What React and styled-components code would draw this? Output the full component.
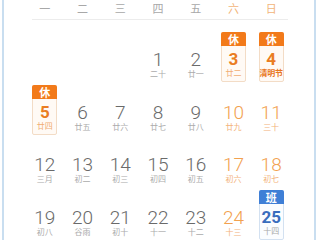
import React from "react";
import styled, { createGlobalStyle, css } from "styled-components";

const GlobalStyle = createGlobalStyle`
  html, body { margin: 0; padding: 0; background: #ffffff; }
  body { font-family: Roboto, "Noto Sans CJK SC", sans-serif; }
`;

const Frame = styled.div`
  width: 320px;
  height: 240px;
  overflow: hidden;
  background: #ffffff;
`;

const Panel = styled.div`
  box-sizing: border-box;
  margin-left: 2px;
  width: 314px;
  height: 240px;
  border-left: 2px solid #c9def0;
  border-right: 2px solid #c9def0;
  padding-left: 22px;
`;

const Columns = styled.div`
  display: grid;
  grid-template-columns: repeat(7, 1fr);
  width: 264px;
`;

const WeekHeader = styled(Columns)`
  height: 16px;
  padding-bottom: 3px;
`;

const WeekName = styled.div`
  font-family: "Noto Sans CJK SC", sans-serif;
  font-size: 11px;
  line-height: 16px;
  text-align: center;
  color: ${(p) => (p.$weekend ? "#f2b57a" : "#a8a8a8")};
`;

const Divider = styled.div`
  margin-left: 6px;
  width: 256px;
  height: 1px;
  background: #ececec;
`;

const Body = styled(Columns)`
  margin-top: 10px;
  grid-auto-rows: 52.5px;
`;

const Cell = styled.div`
  display: flex;
  flex-direction: column;
  align-items: center;
  padding-top: 2px;
`;

const Plain = styled.div`
  display: flex;
  flex-direction: column;
  align-items: center;
  padding-top: 19px;
`;

const palette = {
  rest: {
    head: "#f27a1a",
    border: "#f3dcc6",
    bg: "#fffaf5",
    digit: "#ea7d22",
    lunar: "#f1ad72",
  },
  work: {
    head: "#3f7fd6",
    border: "#d3e1f1",
    bg: "#fbfdff",
    digit: "#3a6dbd",
    lunar: "#a9a9a9",
  },
};

const Badge = styled.div`
  box-sizing: border-box;
  width: 25px;
  display: flex;
  flex-direction: column;
  align-items: center;
  border: 1px solid ${(p) => palette[p.$kind].border};
  border-radius: 2px;
  background: ${(p) => palette[p.$kind].bg};
  padding-bottom: 3px;
`;

const BadgeHead = styled.div`
  align-self: stretch;
  margin: -1px -1px 0;
  height: 14px;
  border-radius: 2px 2px 0 0;
  background: ${(p) => palette[p.$kind].head};
  color: #ffffff;
  font-family: "Noto Sans CJK SC", sans-serif;
  font-weight: 700;
  font-size: 11px;
  line-height: 14px;
  text-align: center;
`;

const Digit = styled.div`
  margin-top: ${(p) => (p.$inBadge ? "4px" : "0")};
  font-family: Roboto, sans-serif;
  font-size: ${(p) => (p.$inBadge ? "17px" : "19px")};
  font-weight: ${(p) => (p.$inBadge ? 700 : 300)};
  line-height: 18px;
  height: 18px;
  white-space: nowrap;
  color: ${(p) => p.$color};
`;

const Lunar = styled.div`
  font-family: "Noto Sans CJK SC", sans-serif;
  font-size: 8px;
  line-height: 10px;
  height: 10px;
  white-space: nowrap;
  color: ${(p) => p.$color};
  ${(p) =>
    p.$fest &&
    css`
      font-weight: 700;
      letter-spacing: -0.2px;
    `}
`;

const weekNames = ["一", "二", "三", "四", "五", "六", "日"];

const rows = [
  [
    null,
    null,
    null,
    { d: 1, l: "二十" },
    { d: 2, l: "廿一" },
    { d: 3, l: "廿二", tag: "rest" },
    { d: 4, l: "清明节", tag: "rest", fest: true },
  ],
  [
    { d: 5, l: "廿四", tag: "rest" },
    { d: 6, l: "廿五" },
    { d: 7, l: "廿六" },
    { d: 8, l: "廿七" },
    { d: 9, l: "廿八" },
    { d: 10, l: "廿九" },
    { d: 11, l: "三十" },
  ],
  [
    { d: 12, l: "三月" },
    { d: 13, l: "初二" },
    { d: 14, l: "初三" },
    { d: 15, l: "初四" },
    { d: 16, l: "初五" },
    { d: 17, l: "初六" },
    { d: 18, l: "初七" },
  ],
  [
    { d: 19, l: "初八" },
    { d: 20, l: "谷雨" },
    { d: 21, l: "初十" },
    { d: 22, l: "十一" },
    { d: 23, l: "十二" },
    { d: 24, l: "十三" },
    { d: 25, l: "十四", tag: "work" },
  ],
];

function Day({ day, weekend }) {
  if (!day) return <Cell />;
  if (day.tag) {
    const c = palette[day.tag];
    return (
      <Cell>
        <Badge $kind={day.tag}>
          <BadgeHead $kind={day.tag}>{day.tag === "rest" ? "休" : "班"}</BadgeHead>
          <Digit $inBadge $color={c.digit}>
            {day.d}
          </Digit>
          <Lunar $fest={day.fest} $color={day.fest ? "#e8761c" : c.lunar}>
            {day.l}
          </Lunar>
        </Badge>
      </Cell>
    );
  }
  return (
    <Cell>
      <Plain>
        <Digit $color={weekend ? "#f2a14f" : "#6a6a6a"}>{day.d}</Digit>
        <Lunar $color={weekend ? "#f3b37a" : "#ababab"}>{day.l}</Lunar>
      </Plain>
    </Cell>
  );
}

export default function App() {
  return (
    <>
      <GlobalStyle />
      <Frame>
        <Panel>
          <WeekHeader>
            {weekNames.map((n, i) => (
              <WeekName key={n} $weekend={i >= 5}>
                {n}
              </WeekName>
            ))}
          </WeekHeader>
          <Divider />
          <Body>
            {rows.map((row, r) =>
              row.map((day, i) => (
                <Day key={`${r}-${i}`} day={day} weekend={i >= 5} />
              ))
            )}
          </Body>
        </Panel>
      </Frame>
    </>
  );
}
